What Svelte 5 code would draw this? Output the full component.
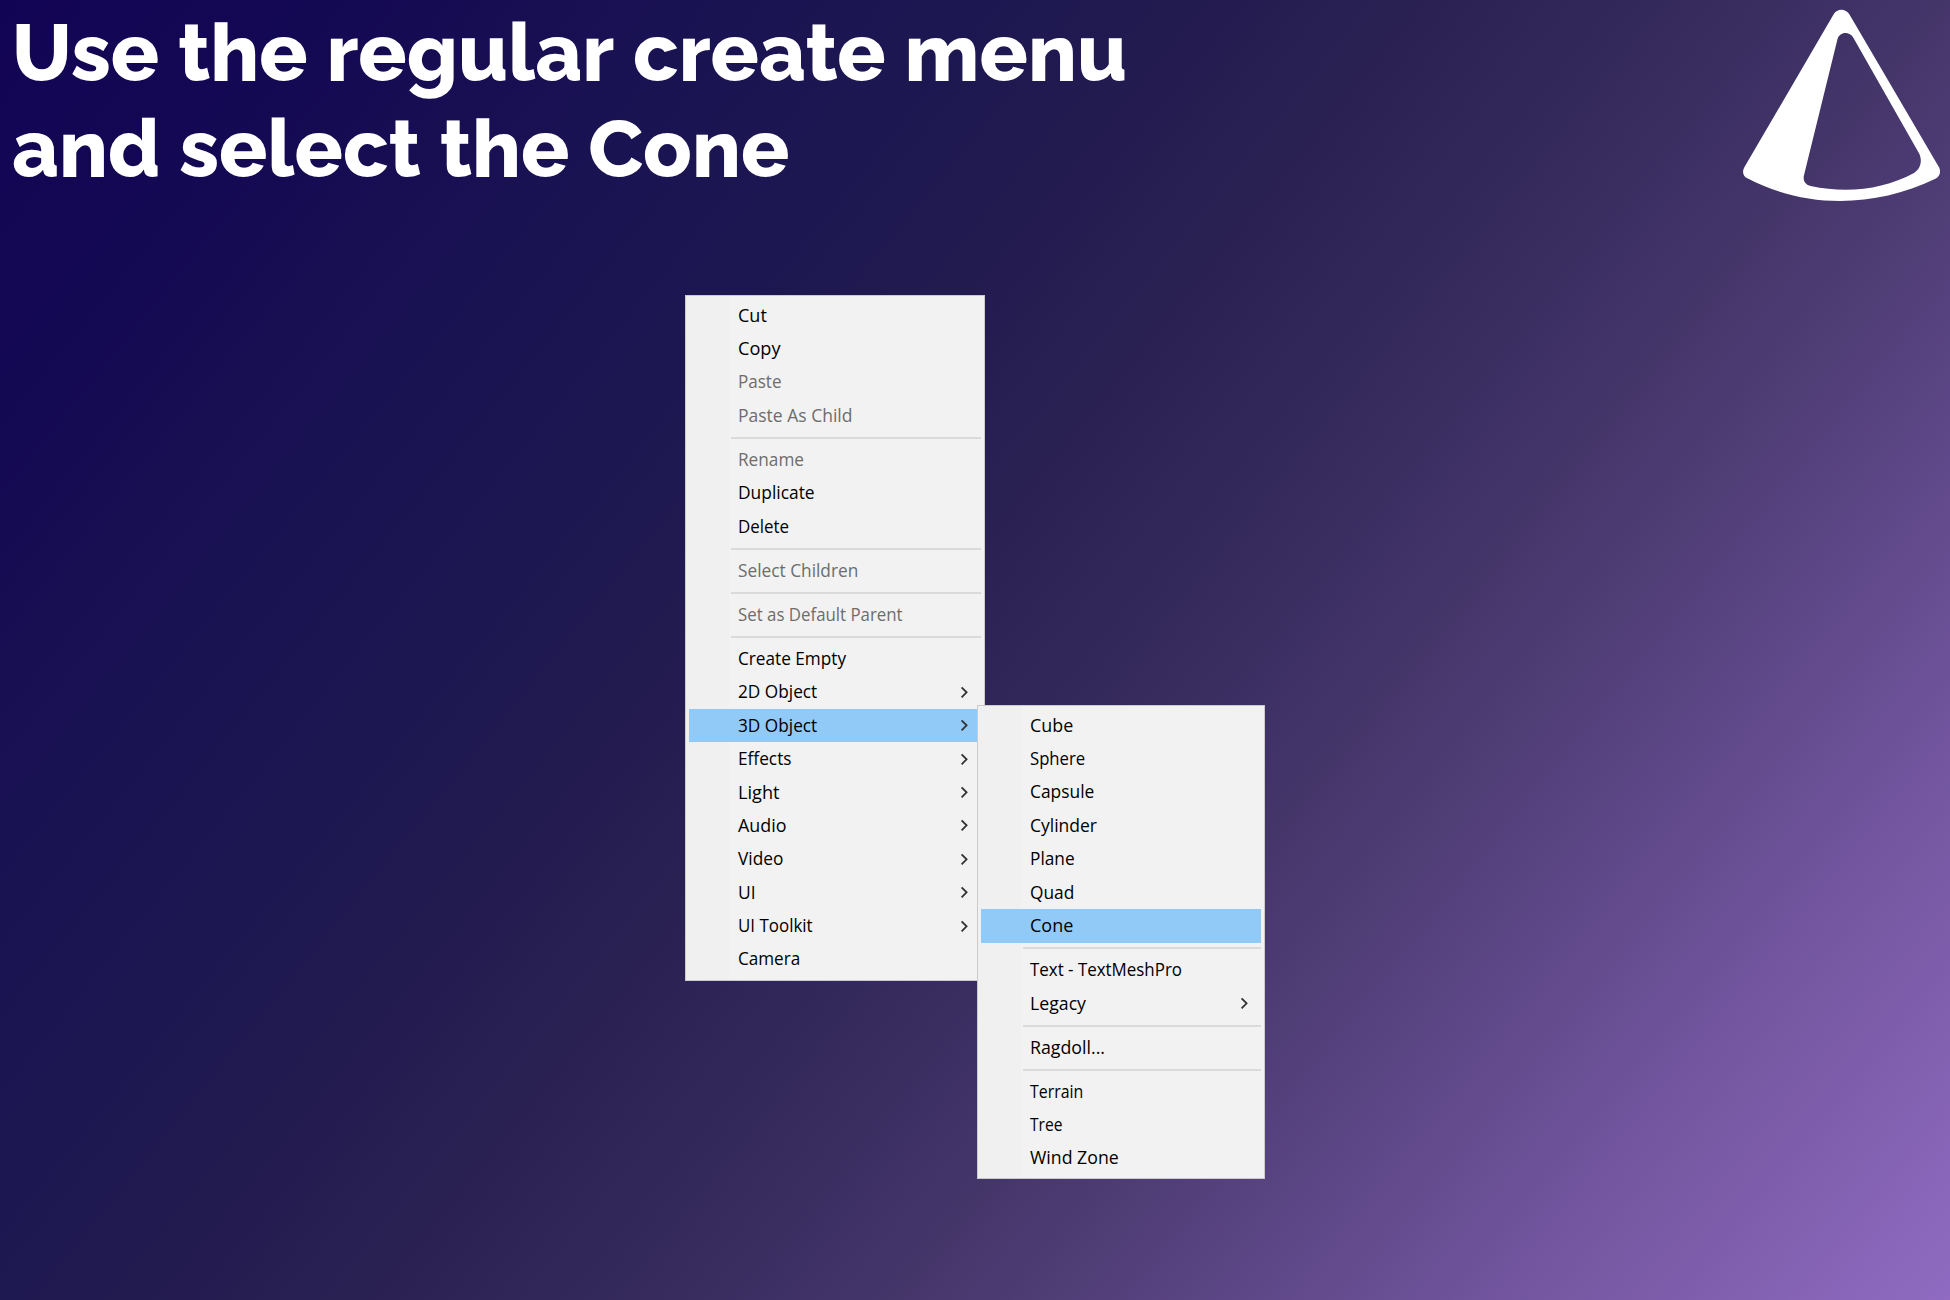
<script>
  const titleLines = ['Use the regular create menu', 'and select the Cone'];

  const mainMenu = [
    { label: 'Cut', w: 28.8 },
    { label: 'Copy', w: 42.5 },
    { label: 'Paste', w: 43.5, disabled: true },
    { label: 'Paste As Child', w: 114.5, disabled: true },
    { separator: true },
    { label: 'Rename', w: 66, disabled: true },
    { label: 'Duplicate', w: 76.6 },
    { label: 'Delete', w: 51 },
    { separator: true },
    { label: 'Select Children', w: 120.3, disabled: true },
    { separator: true },
    { label: 'Set as Default Parent', w: 164.6, disabled: true },
    { separator: true },
    { label: 'Create Empty', w: 108 },
    { label: '2D Object', w: 79.2, submenu: true },
    { label: '3D Object', w: 79.2, submenu: true, active: true },
    { label: 'Effects', w: 53.5, submenu: true },
    { label: 'Light', w: 41.5, submenu: true },
    { label: 'Audio', w: 48.5, submenu: true },
    { label: 'Video', w: 45.3, submenu: true },
    { label: 'UI', w: 17.6, submenu: true },
    { label: 'UI Toolkit', w: 74.6, submenu: true },
    { label: 'Camera', w: 62.2 }
  ];

  const objectMenu = [
    { label: 'Cube', w: 43.2 },
    { label: 'Sphere', w: 55.2 },
    { label: 'Capsule', w: 64.4 },
    { label: 'Cylinder', w: 67 },
    { label: 'Plane', w: 44.6 },
    { label: 'Quad', w: 44.3 },
    { label: 'Cone', w: 43.3, active: true },
    { separator: true },
    { label: 'Text - TextMeshPro', w: 152 },
    { label: 'Legacy', w: 56, submenu: true },
    { separator: true },
    { label: 'Ragdoll...', w: 75 },
    { separator: true },
    { label: 'Terrain', w: 53.2 },
    { label: 'Tree', w: 32.4 },
    { label: 'Wind Zone', w: 88.7 }
  ];
</script>

{#snippet menu(items, name)}
  <ul class="menu {name}">
    {#each items as item}
      {#if item.separator}
        <li class="separator"></li>
      {:else}
        <li class="item" class:disabled={item.disabled} class:active={item.active}>
          <svg class="label" width={item.w + 2} height="30">
            <text x="0" y="21.2" textLength={item.w} lengthAdjust="spacingAndGlyphs">{item.label}</text>
          </svg>
          {#if item.submenu}
            <svg class="chevron" width="9" height="13" viewBox="0 0 9 13">
              <path d="M1.6 1.3 L6.6 6.3 L1.6 11.3" />
            </svg>
          {/if}
        </li>
      {/if}
    {/each}
  </ul>
{/snippet}

<main class="slide">
  <header>
    <h1>
      {#each titleLines as line}
        <span class="line">
          {#each line.split(' ') as word}
            <span class="word">{word}</span>{' '}
          {/each}
        </span>
      {/each}
    </h1>
    <svg class="logo" width="220" height="210" viewBox="0 0 660 630">
      <path
        fill-rule="evenodd"
        d="M311 43 C321 25 347 25 358 43 L627 502 C634 515 629 530 616 536 C430 625 226 625 52 535 C40 529 35 515 43 502 Z
           M322 119 C327 95 358 92 370 113 L567 460 C578 482 572 507 552 519 C460 569 350 581 242 558 C226 554 218 542 222 526 Z"
      />
    </svg>
  </header>
  {@render menu(mainMenu, 'main')}
  {@render menu(objectMenu, 'objects')}
</main>

<style>
  :global(body) {
    margin: 0;
    overflow: hidden;
  }

  .slide {
    position: relative;
    width: 1950px;
    height: 1300px;
    overflow: hidden;
    background: linear-gradient(
      129deg,
      #120454 0%,
      #140953 12%,
      #1a1352 24%,
      #1d1751 33%,
      #251d50 42.3%,
      #2e2455 50.5%,
      #392d60 58.5%,
      #45366a 65%,
      #4f3d76 70%,
      #7658a3 87%,
      #906bc1 100%
    );
  }

  header {
    display: flex;
    justify-content: space-between;
  }

  h1 {
    display: flex;
    flex-direction: column;
    margin: 0;
    padding: 5px 0 0 12px;
    color: #fff;
    font: 800 80px/96px 'Raleway', 'Open Sans', sans-serif;
    letter-spacing: 0.11px;
    white-space: nowrap;
  }

  .word {
    display: inline-block;
  }

  .logo {
    display: block;
    fill: #fff;
  }

  .menu {
    position: absolute;
    box-sizing: border-box;
    margin: 0;
    padding: 3px;
    list-style: none;
    border: 1px solid #cbcbcb;
    background: linear-gradient(90deg, #f0f0f0 43px, #f2f2f2 43px);
    font: 500 18.2px 'Segoe UI', 'Open Sans', sans-serif;
  }

  .main {
    left: 685px;
    top: 295px;
    width: 300px;
    height: 686px;
  }

  .objects {
    left: 977px;
    top: 705px;
    width: 288px;
    height: 474px;
  }

  .item {
    display: flex;
    align-items: center;
    justify-content: space-between;
    box-sizing: border-box;
    height: 33.4px;
    padding: 0 12.3px 0 49px;
    color: #000;
  }

  .disabled {
    color: #6d6d6d;
  }

  .active {
    background: #91c9f7;
  }

  .label {
    overflow: visible;
    fill: currentColor;
  }

  .chevron {
    fill: none;
    stroke: #333;
    stroke-width: 1.8;
  }

  .separator {
    height: 2px;
    margin: 4.35px 0 4.35px 42px;
    background: #dadada;
  }
</style>
